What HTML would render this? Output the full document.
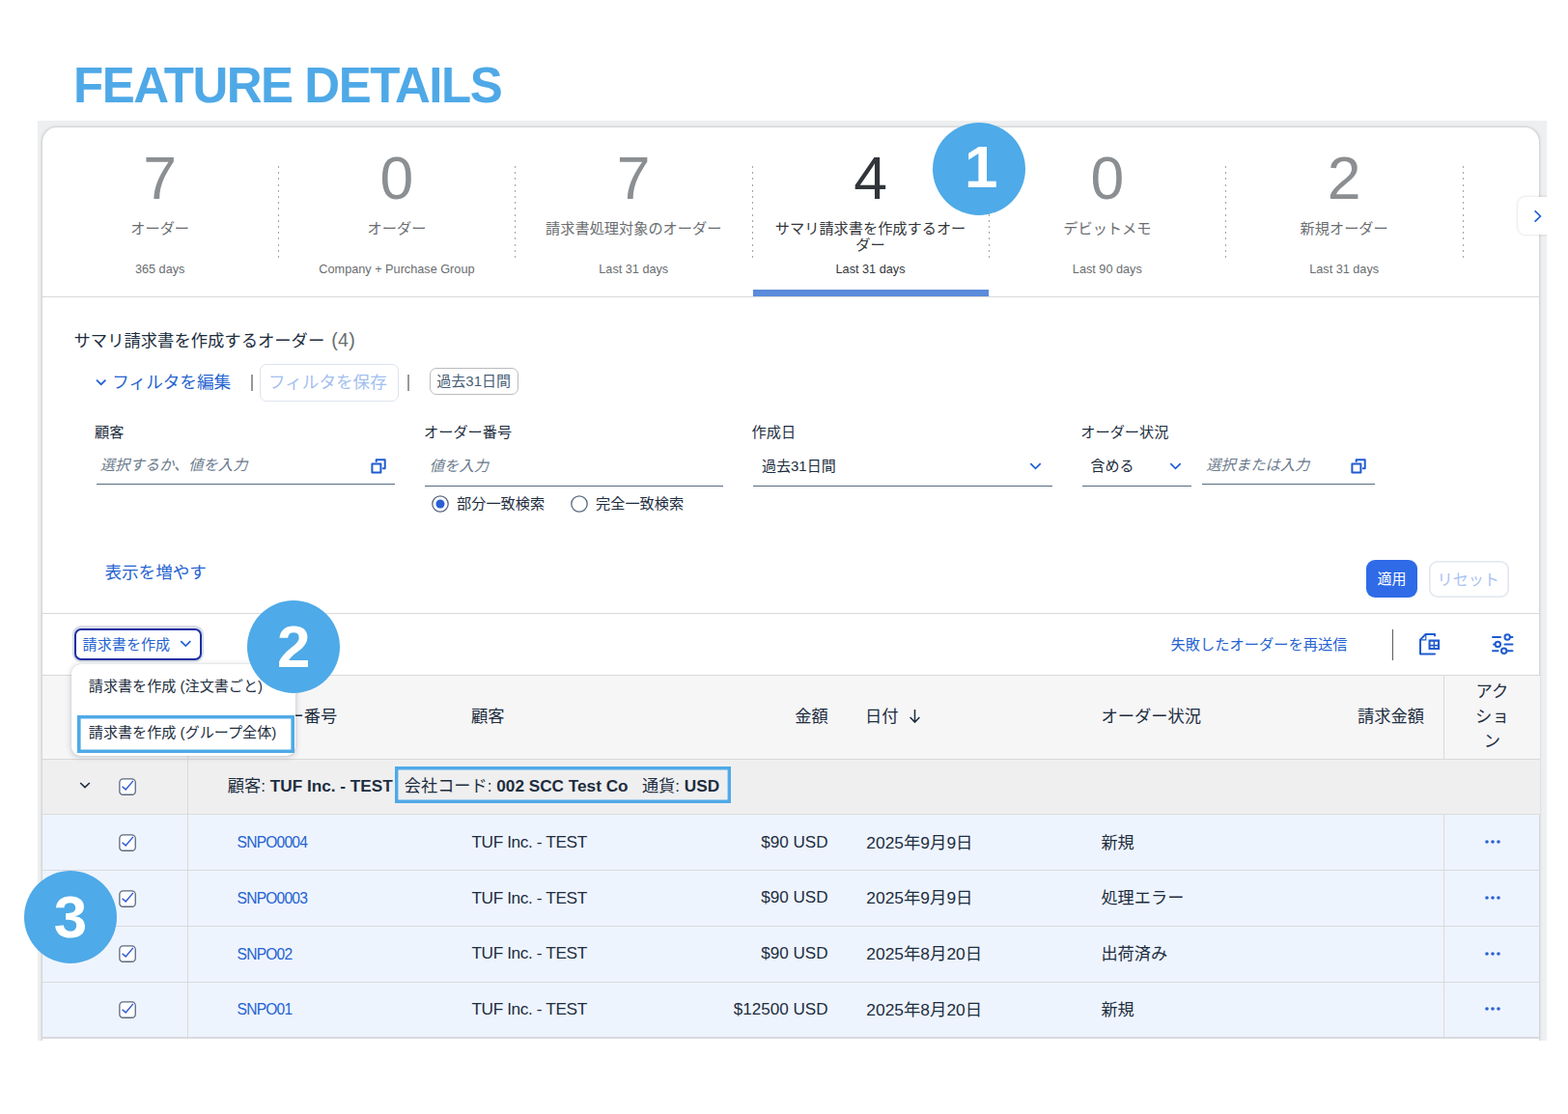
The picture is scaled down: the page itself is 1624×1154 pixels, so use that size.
<!DOCTYPE html>
<html lang="ja">
<head>
<meta charset="utf-8">
<title>Feature Details</title>
<style>
html,body{margin:0;padding:0}
body{width:1624px;height:1154px;position:relative;overflow:hidden;background:#fff;font-family:"Liberation Sans","Noto Sans CJK JP",sans-serif;color:#1d2d3e;font-size:15px}
.a{position:absolute;white-space:nowrap}
.t{position:absolute;white-space:nowrap;line-height:24px;height:24px}
#shot{position:absolute;left:0;top:0;width:1624px;height:1154px;clip-path:inset(125px 22px 76px 39px)}
#bg{position:absolute;left:39px;top:125px;width:1563px;height:953px;background:#edeff0}
#card{position:absolute;left:44px;top:132px;width:1550px;height:1000px;border-radius:15px;background:#fff;box-shadow:0 0 0 1.1px #d5d7d8,0 0 1.5px 1.5px #e0e2e3}
.hl{position:absolute;height:1px;background:#d9d9d9}
.vl{position:absolute;width:1px;background:#d9d9d9}
/* tabs */
.tab{position:absolute;top:131px;width:245.3px;height:176px;text-align:center}
.tab .n{position:absolute;left:0;right:0;top:151px;font-size:62.5px;line-height:68px;color:#8c8f92}
.tab .l{position:absolute;left:0;right:0;top:97px;font-size:15.2px;line-height:17px;color:#6a6d70}
.tab .s{position:absolute;left:0;right:0;top:140px;font-size:12.7px;line-height:16px;color:#6a6d70}
.tab.on .n,.tab.on .l,.tab.on .s{color:#32363a}
.dot{position:absolute;top:171.6px;width:1px;height:96px;background:repeating-linear-gradient(to bottom,#a4a4a4 0,#a4a4a4 2px,transparent 2px,transparent 6.2px)}
.blue{color:#2563d0}
.ph{font-style:italic;color:#6b7b8d}
.ul{position:absolute;height:1.4px;background:#556b82}
.circ{position:absolute;width:96px;height:96px;border-radius:50%;background:#4eaae8}
.cb{position:absolute;left:122px;width:20px;height:20px}
.row{position:absolute;left:44px;width:1550px;background:#eef4fe}
.num{position:absolute;white-space:nowrap;font-family:"Liberation Sans",sans-serif;font-weight:bold;font-size:62px;line-height:1;color:#fff}
</style>
</head>
<body>
<div class="a" style="left:76.1px;top:63px;font-family:'Liberation Sans',sans-serif;font-weight:bold;font-size:51px;line-height:1;letter-spacing:-1.5px;color:#4fa9e7">FEATURE DETAILS</div>
<div id="shot">
<div id="bg"></div>
<div id="card"></div>

<!-- TABS -->
<div class="tab" style="left:43px"><div class="n" style="top:19.4px">7</div><div class="l">オーダー</div><div class="s">365 days</div></div>
<div class="tab" style="left:288.3px"><div class="n" style="top:19.4px">0</div><div class="l">オーダー</div><div class="s">Company + Purchase Group</div></div>
<div class="tab" style="left:533.6px"><div class="n" style="top:19.4px">7</div><div class="l">請求書処理対象のオーダー</div><div class="s">Last 31 days</div></div>
<div class="tab on" style="left:778.9px"><div class="n" style="top:19.4px">4</div><div class="l">サマリ請求書を作成するオー<br>ダー</div><div class="s">Last 31 days</div></div>
<div class="tab" style="left:1024.2px"><div class="n" style="top:19.4px">0</div><div class="l">デビットメモ</div><div class="s">Last 90 days</div></div>
<div class="tab" style="left:1269.5px"><div class="n" style="top:19.4px">2</div><div class="l">新規オーダー</div><div class="s">Last 31 days</div></div>
<div class="dot" style="left:287.9px"></div>
<div class="dot" style="left:533.2px"></div>
<div class="dot" style="left:778.6px"></div>
<div class="dot" style="left:1023.9px"></div>
<div class="dot" style="left:1269.2px"></div>
<div class="dot" style="left:1514.6px"></div>
<div class="a" style="left:779.7px;top:299.9px;width:244.4px;height:7px;background:#5b8bdb"></div>
<div class="hl" style="left:44px;top:306.6px;width:1551px"></div>
<!-- scroll button -->
<div class="a" style="left:1572.3px;top:204.3px;width:40px;height:39px;background:#fff;border-radius:8px;box-shadow:0 0 3px rgba(0,0,0,.18)"></div>
<svg class="a" style="left:1587px;top:216px;width:12px;height:16px" viewBox="0 0 12 16"><path d="M2.6 2.4 8.4 8 2.6 13.6" fill="none" stroke="#1f5fd6" stroke-width="1.7"/></svg>


<!-- HEADING + FILTER BAR -->
<div class="t" style="left:76.5px;top:341.3px;font-size:17.32px">サマリ請求書を作成するオーダー</div>
<div class="t" style="left:343.3px;top:340.1px;font-size:19.6px;letter-spacing:.3px;color:#6a6d70">(4)</div>
<svg class="a" style="left:98px;top:389px;width:14px;height:14px" viewBox="0 0 14 14"><path d="M2 4.6 6.7 9.2 11.4 4.6" fill="none" stroke="#1f5fd6" stroke-width="1.7"/></svg>
<div class="t blue" style="left:116.3px;top:384.3px;font-size:17.6px">フィルタを編集</div>
<div class="a" style="left:259.6px;top:388px;width:2px;height:17px;background:#96999c"></div>
<div class="a" style="left:269.4px;top:377.3px;width:141.8px;height:36.4px;border:1px solid #dde3ec;border-radius:7px;background:#fff"></div>
<div class="t" style="left:278px;top:384.3px;font-size:17.6px;color:#a3bff0">フィルタを保存</div>
<div class="a" style="left:421.8px;top:388px;width:2px;height:17px;background:#96999c"></div>
<div class="a" style="left:444.9px;top:381.3px;width:90.6px;height:25.9px;border:1px solid #b9bcc0;border-radius:7px;background:#fff"></div>
<div class="t" style="left:452.3px;top:383.2px;font-size:15px;color:#475e75">過去31日間</div>

<!-- filter 1 -->
<div class="t" style="left:98px;top:435.5px;font-size:15.2px">顧客</div>
<div class="t ph" style="left:103.8px;top:470px;font-size:15.3px">選択するか、値を入力</div>
<svg class="a" style="left:382.5px;top:473.5px;width:18px;height:18px" viewBox="0 0 18 18"><path d="M2.4 6.5h9v9h-9z" fill="none" stroke="#1f5bd0" stroke-width="2" stroke-linejoin="round"/><path d="M6.7 3.9V2.3h9v9h-1.9" fill="none" stroke="#1f5bd0" stroke-width="2" stroke-linejoin="round" stroke-linecap="round"/></svg>
<div class="ul" style="left:100.2px;top:500.8px;width:308.6px"></div>
<!-- filter 2 -->
<div class="t" style="left:439px;top:435.5px;font-size:15.2px">オーダー番号</div>
<div class="t ph" style="left:444.8px;top:471px;font-size:15.3px">値を入力</div>
<div class="ul" style="left:440.3px;top:502.8px;width:308.6px"></div>
<svg class="a" style="left:445.8px;top:511.7px;width:20px;height:20px" viewBox="0 0 20 20"><circle cx="10" cy="10" r="8.2" fill="#fff" stroke="#5b6b82" stroke-width="1.3"/><circle cx="10" cy="10" r="4.5" fill="#2a5fd6"/></svg>
<div class="t" style="left:473px;top:509.5px;font-size:15.2px">部分一致検索</div>
<svg class="a" style="left:589.9px;top:511.7px;width:20px;height:20px" viewBox="0 0 20 20"><circle cx="10" cy="10" r="8.2" fill="#fff" stroke="#5b6b82" stroke-width="1.3"/></svg>
<div class="t" style="left:617px;top:509.5px;font-size:15.2px">完全一致検索</div>
<!-- filter 3 -->
<div class="t" style="left:778.6px;top:435.5px;font-size:15.2px">作成日</div>
<div class="t" style="left:789px;top:471.2px;font-size:15px">過去31日間</div>
<svg class="a" style="left:1065px;top:476px;width:15px;height:14px" viewBox="0 0 15 14"><path d="M2.3 4.1 7.5 9.3 12.7 4.1" fill="none" stroke="#1f5fd6" stroke-width="1.7"/></svg>
<div class="ul" style="left:780.4px;top:502.8px;width:309.2px"></div>
<!-- filter 4 -->
<div class="t" style="left:1119.3px;top:435.5px;font-size:15.2px">オーダー状況</div>
<div class="t" style="left:1129.6px;top:471.2px;font-size:15px">含める</div>
<svg class="a" style="left:1210.3px;top:476px;width:15px;height:14px" viewBox="0 0 15 14"><path d="M2.3 4.1 7.5 9.3 12.7 4.1" fill="none" stroke="#1f5fd6" stroke-width="1.7"/></svg>
<div class="ul" style="left:1121px;top:502.8px;width:113px"></div>
<div class="t ph" style="left:1249.3px;top:470px;font-size:15.3px">選択または入力</div>
<svg class="a" style="left:1398.3px;top:473.8px;width:18px;height:18px" viewBox="0 0 18 18"><path d="M2.4 6.5h9v9h-9z" fill="none" stroke="#1f5bd0" stroke-width="2" stroke-linejoin="round"/><path d="M6.7 3.9V2.3h9v9h-1.9" fill="none" stroke="#1f5bd0" stroke-width="2" stroke-linejoin="round" stroke-linecap="round"/></svg>
<div class="ul" style="left:1245.2px;top:500.8px;width:178.4px"></div>

<div class="t blue" style="left:108.4px;top:581.4px;font-size:17.6px">表示を増やす</div>
<div class="a" style="left:1415px;top:580px;width:53px;height:39px;border-radius:9px;background:#2f6be7"></div>
<div class="t" style="left:1426.5px;top:587.7px;font-size:15px;color:#fff">適用</div>
<div class="a" style="left:1480px;top:581px;width:83px;height:38px;border-radius:9px;background:#fff;box-shadow:inset 0 0 0 1.6px #e1e6ef"></div>
<div class="t" style="left:1488.6px;top:587.7px;font-size:16.1px;color:#a9c3f2">リセット</div>
<div class="hl" style="left:44px;top:634.6px;width:1551px"></div>

<!-- TOOLBAR -->
<div class="a" style="left:74.6px;top:648.4px;width:136.2px;height:38px;border-radius:9px;background:#d9dde6"></div>
<div class="a" style="left:77px;top:650.7px;width:127.6px;height:29.6px;border:2px solid #1c2fa3;border-radius:7px;background:#fff"></div>
<div class="t blue" style="left:85.6px;top:655.6px;font-size:15.1px">請求書を作成</div>
<svg class="a" style="left:185px;top:660px;width:15px;height:14px" viewBox="0 0 15 14"><path d="M2.3 4.1 7.3 9 12.3 4.1" fill="none" stroke="#1f5fd6" stroke-width="1.7"/></svg>
<div class="t blue" style="left:1212.4px;top:656px;font-size:15.25px">失敗したオーダーを再送信</div>
<div class="a" style="left:1441.5px;top:651.6px;width:1.5px;height:32.2px;background:#5a5d60"></div>
<svg class="a" style="left:1468px;top:654px;width:26px;height:26px" viewBox="0 0 26 26"><path d="M18 4.6V3H8.6L3 8.6V23.4H18" fill="none" stroke="#1f5bd0" stroke-width="2" stroke-linejoin="round" stroke-linecap="round"/><path d="M3 8.8h5.8V3" fill="none" stroke="#1f5bd0" stroke-width="1.2"/><path d="M11.5 8.5h11.6v10.6H11.5zM13.6 10.7v3.1h3v-3.1zm4.4 0v3.1h3v-3.1zm-4.4 4.9v1.5h3v-1.5zm4.4 0v1.5h3v-1.5z" fill="#1f5bd0" fill-rule="evenodd"/></svg>
<svg class="a" style="left:1543px;top:654px;width:26px;height:26px" viewBox="0 0 26 26" fill="none" stroke="#1f5bd0" stroke-width="2" stroke-linecap="round"><path d="M3 6H11M21.5 6H23.5M4 13.4h.6M15.5 13.4H23.5M3 20.3H8.5M18 20.3H23.5"/><circle cx="18.2" cy="6" r="2.7"/><circle cx="8.3" cy="13.4" r="2.7"/><circle cx="14.7" cy="20.3" r="2.7"/></svg>
<div class="hl" style="left:44px;top:699px;width:1551px"></div>

<!-- TABLE HEADER -->
<div class="a" style="left:44px;top:700px;width:1551px;height:86px;background:#f6f6f7"></div>
<div class="t" style="left:245.6px;top:730.2px;font-size:17.3px">オーダー番号</div>
<div class="t" style="left:488px;top:730.2px;font-size:17.3px">顧客</div>
<div class="t" style="left:823.2px;top:730.2px;font-size:17.3px">金額</div>
<div class="t" style="left:895.9px;top:730.2px;font-size:17.3px">日付</div>
<svg class="a" style="left:940px;top:733px;width:16px;height:18px" viewBox="940 733 16 18"><path d="M947.5 735.1V748M942.6 743.1 947.5 748.1 952.4 743.1" fill="none" stroke="#1d2d3e" stroke-width="1.5"/></svg>
<div class="t" style="left:1140.4px;top:730.2px;font-size:17.3px">オーダー状況</div>
<div class="t" style="left:1405.9px;top:730.2px;font-size:17.3px">請求金額</div>
<div class="a" style="left:1495.4px;top:704.4px;width:100px;text-align:center;font-size:17.3px;line-height:25.9px">アク<br>ショ<br>ン</div>
<div class="hl" style="left:44px;top:785.8px;width:1551px"></div>

<!-- GROUP ROW -->
<div class="a" style="left:44px;top:786.6px;width:1551px;height:56.6px;background:#efeff0"></div>
<svg class="a" style="left:80px;top:806px;width:16px;height:14px" viewBox="0 0 16 14"><path d="M3.2 5 8 9.6 12.8 5" fill="none" stroke="#1d2d3e" stroke-width="1.6"/></svg>
<svg class="cb" style="top:804.8px" viewBox="0 0 20 20"><rect x="1.85" y="1.85" width="16.4" height="16.4" rx="3.6" fill="#fff" stroke="#5b6b82" stroke-width="1.3"/><path d="M4.6 9.8 8.2 12.9 15.9 3.9" fill="none" stroke="#2a55d8" stroke-width="1.4"/></svg>
<div class="t" style="left:235.8px;top:802.2px;font-size:17.2px">顧客: <b>TUF Inc. - TEST</b></div>
<div class="a" style="left:409.2px;top:794.3px;width:347.7px;height:38px;box-shadow:inset 0 0 0 3.4px #4fa9e7"></div>
<div class="t" style="left:418.8px;top:802.2px;font-size:17.2px">会社コード: <b>002 SCC Test Co</b>&nbsp;&nbsp; 通貨: <b>USD</b></div>
<div class="hl" style="left:44px;top:843.2px;width:1551px;background:#dcdcdc"></div>

<!-- DATA ROWS -->
<div class="row" style="top:844px;height:231px"></div>
<div class="hl" style="left:44px;top:901px;width:1551px;background:#d8dadd"></div>
<div class="hl" style="left:44px;top:959px;width:1551px;background:#d8dadd"></div>
<div class="hl" style="left:44px;top:1017px;width:1551px;background:#d8dadd"></div>
<div class="hl" style="left:44px;top:1074px;width:1551px;height:1.5px;background:#d8dadd"></div>
<div class="vl" style="left:194px;top:700px;height:375px"></div>
<div class="vl" style="left:1495px;top:700px;height:86px"></div>
<div class="vl" style="left:1495px;top:844px;height:231px"></div>
<svg class="cb" style="top:862.7px" viewBox="0 0 20 20"><rect x="1.85" y="1.85" width="16.4" height="16.4" rx="3.6" fill="#fff" stroke="#5b6b82" stroke-width="1.3"/><path d="M4.6 9.8 8.2 12.9 15.9 3.9" fill="none" stroke="#2a55d8" stroke-width="1.4"/></svg>
<div class="t blue" style="left:245.6px;top:860.5px;font-size:15.6px;letter-spacing:-.8px;margin-top:.5px">SNPO0004</div>
<div class="t" style="left:488.4px;top:860.5px;font-size:17.3px;letter-spacing:-.4px;margin-top:-.8px">TUF Inc. - TEST</div>
<div class="t" style="left:657.6px;width:200px;text-align:right;top:860.5px;font-size:17.1px">$90 USD</div>
<div class="t" style="left:897.3px;top:860.5px;font-size:17.4px">2025年9月9日</div>
<div class="t" style="left:1140.4px;top:860.5px;font-size:17.2px">新規</div>
<div class="a" style="left:1537.6px;top:870.0px;width:16px;height:4px"><svg style="display:block" width="16" height="4" viewBox="0 0 16 4"><circle cx="2" cy="2" r="1.8" fill="#2a62d0"/><circle cx="8" cy="2" r="1.8" fill="#2a62d0"/><circle cx="14" cy="2" r="1.8" fill="#2a62d0"/></svg></div>
<svg class="cb" style="top:920.6px" viewBox="0 0 20 20"><rect x="1.85" y="1.85" width="16.4" height="16.4" rx="3.6" fill="#fff" stroke="#5b6b82" stroke-width="1.3"/><path d="M4.6 9.8 8.2 12.9 15.9 3.9" fill="none" stroke="#2a55d8" stroke-width="1.4"/></svg>
<div class="t blue" style="left:245.6px;top:918.4px;font-size:15.6px;letter-spacing:-.8px;margin-top:.5px">SNPO0003</div>
<div class="t" style="left:488.4px;top:918.4px;font-size:17.3px;letter-spacing:-.4px;margin-top:-.8px">TUF Inc. - TEST</div>
<div class="t" style="left:657.6px;width:200px;text-align:right;top:918.4px;font-size:17.1px">$90 USD</div>
<div class="t" style="left:897.3px;top:918.4px;font-size:17.4px">2025年9月9日</div>
<div class="t" style="left:1140.4px;top:918.4px;font-size:17.2px">処理エラー</div>
<div class="a" style="left:1537.6px;top:927.9px;width:16px;height:4px"><svg style="display:block" width="16" height="4" viewBox="0 0 16 4"><circle cx="2" cy="2" r="1.8" fill="#2a62d0"/><circle cx="8" cy="2" r="1.8" fill="#2a62d0"/><circle cx="14" cy="2" r="1.8" fill="#2a62d0"/></svg></div>
<svg class="cb" style="top:978.3px" viewBox="0 0 20 20"><rect x="1.85" y="1.85" width="16.4" height="16.4" rx="3.6" fill="#fff" stroke="#5b6b82" stroke-width="1.3"/><path d="M4.6 9.8 8.2 12.9 15.9 3.9" fill="none" stroke="#2a55d8" stroke-width="1.4"/></svg>
<div class="t blue" style="left:245.6px;top:976.1px;font-size:15.6px;letter-spacing:-.8px;margin-top:.5px">SNPO02</div>
<div class="t" style="left:488.4px;top:976.1px;font-size:17.3px;letter-spacing:-.4px;margin-top:-.8px">TUF Inc. - TEST</div>
<div class="t" style="left:657.6px;width:200px;text-align:right;top:976.1px;font-size:17.1px">$90 USD</div>
<div class="t" style="left:897.3px;top:976.1px;font-size:17.4px">2025年8月20日</div>
<div class="t" style="left:1140.4px;top:976.1px;font-size:17.2px">出荷済み</div>
<div class="a" style="left:1537.6px;top:985.6px;width:16px;height:4px"><svg style="display:block" width="16" height="4" viewBox="0 0 16 4"><circle cx="2" cy="2" r="1.8" fill="#2a62d0"/><circle cx="8" cy="2" r="1.8" fill="#2a62d0"/><circle cx="14" cy="2" r="1.8" fill="#2a62d0"/></svg></div>
<svg class="cb" style="top:1036.1px" viewBox="0 0 20 20"><rect x="1.85" y="1.85" width="16.4" height="16.4" rx="3.6" fill="#fff" stroke="#5b6b82" stroke-width="1.3"/><path d="M4.6 9.8 8.2 12.9 15.9 3.9" fill="none" stroke="#2a55d8" stroke-width="1.4"/></svg>
<div class="t blue" style="left:245.6px;top:1033.9px;font-size:15.6px;letter-spacing:-.8px;margin-top:.5px">SNPO01</div>
<div class="t" style="left:488.4px;top:1033.9px;font-size:17.3px;letter-spacing:-.4px;margin-top:-.8px">TUF Inc. - TEST</div>
<div class="t" style="left:657.6px;width:200px;text-align:right;top:1033.9px;font-size:17.1px">$12500 USD</div>
<div class="t" style="left:897.3px;top:1033.9px;font-size:17.4px">2025年8月20日</div>
<div class="t" style="left:1140.4px;top:1033.9px;font-size:17.2px">新規</div>
<div class="a" style="left:1537.6px;top:1043.4px;width:16px;height:4px"><svg style="display:block" width="16" height="4" viewBox="0 0 16 4"><circle cx="2" cy="2" r="1.8" fill="#2a62d0"/><circle cx="8" cy="2" r="1.8" fill="#2a62d0"/><circle cx="14" cy="2" r="1.8" fill="#2a62d0"/></svg></div>



<!-- DROPDOWN MENU -->
<div class="a" style="left:73.9px;top:688.4px;width:232.6px;height:94.6px;background:#fff;border-radius:9px;box-shadow:0 1px 6px rgba(60,70,90,.28),0 0 1px rgba(60,70,90,.3)"></div>
<div class="t" style="left:91.8px;top:699.2px;font-size:15.1px">請求書を作成 (注文書ごと)</div>
<div class="a" style="left:80px;top:741px;width:224.8px;height:38.8px;background:#fff;box-shadow:inset 0 0 0 3.6px #4fa9e7"></div>
<div class="t" style="left:91.8px;top:747.3px;font-size:15.1px">請求書を作成 (グループ全体)</div>

</div>

<div class="circ" style="left:965.9px;top:126.9px"></div>
<div class="num" style="left:999px;top:141.7px">1</div>
<div class="circ" style="left:255.9px;top:621.9px"></div>
<div class="num" style="left:286.9px;top:638.8px">2</div>
<div class="circ" style="left:25px;top:902px"></div>
<div class="num" style="left:55.8px;top:918.8px">3</div>

</body>
</html>
